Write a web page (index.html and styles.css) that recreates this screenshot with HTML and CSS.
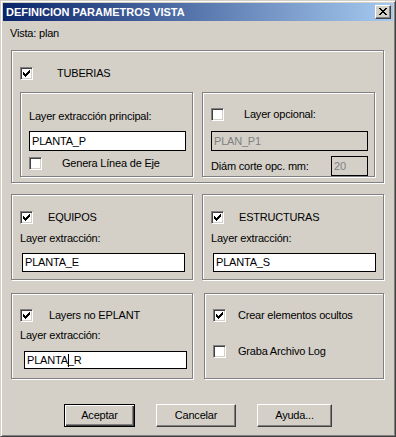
FILE: index.html
```html
<!DOCTYPE html>
<html lang="es">

<head>
    <meta charset="UTF-8">
    <meta name="viewport" content="width=device-width, initial-scale=1.0">
    <title>Definicion parametros vista</title>

    <link rel="stylesheet" href="styles.css">
</head>

<body>
    <div class="window">
        <div class="titlebar">
            <span class="title">DEFINICION PARAMETROS VISTA</span>
            <span class="close">
                <svg width="8" height="7" viewBox="0 0 8 7" shape-rendering="crispEdges">
                    <path d="M0 0h2v1h-2z M6 0h2v1h-2z M1 1h2v1h-2z M5 1h2v1h-2z M2 2h4v1h-4z M3 3h2v1h-2z M2 4h4v1h-4z M1 5h2v1h-2z M5 5h2v1h-2z M0 6h2v1h-2z M6 6h2v1h-2z" fill="#000"></path>
                </svg>
            </span>
        </div>

        <div class="content">
            <div class="vista">Vista: plan</div>

            <!-- TUBERIAS -->
            <div class="group tuberias">
                <div class="row gap_big">
                    <span class="check on"><svg width="7" height="7" viewBox="0 0 7 7" shape-rendering="crispEdges"><path d="M6 0h1v1h-1z M5 1h2v1h-2z M0 2h1v1h-1z M4 2h3v1h-3z M0 3h2v1h-2z M3 3h3v1h-3z M0 4h5v1h-5z M1 5h3v1h-3z M2 6h1v1h-1z" fill="#000"></path></svg></span>
                    <span>TUBERIAS</span>
                </div>

                <div class="inner_pair">
                    <div class="group inner inner_left">
                        <div class="lbl">Layer extracción principal:</div>
                        <div class="field f_principal">PLANTA_P</div>
                        <div class="row gap_mid eje">
                            <span class="check"></span>
                            <span>Genera Línea de Eje</span>
                        </div>
                    </div>

                    <div class="group inner inner_right">
                        <div class="row gap_mid">
                            <span class="check"></span>
                            <span>Layer opcional:</span>
                        </div>
                        <div class="field disabled f_opcional">PLAN_P1</div>
                        <div class="row diam">
                            <span>Diám corte opc. mm:</span>
                            <div class="field disabled f_small">20</div>
                        </div>
                    </div>
                </div>
            </div>

            <!-- EQUIPOS / ESTRUCTURAS -->
            <div class="pair pair_one">
                <div class="group box">
                    <div class="row gap_small">
                        <span class="check on"><svg width="7" height="7" viewBox="0 0 7 7" shape-rendering="crispEdges"><path d="M6 0h1v1h-1z M5 1h2v1h-2z M0 2h1v1h-1z M4 2h3v1h-3z M0 3h2v1h-2z M3 3h3v1h-3z M0 4h5v1h-5z M1 5h3v1h-3z M2 6h1v1h-1z" fill="#000"></path></svg></span>
                        <span>EQUIPOS</span>
                    </div>
                    <div class="lbl lbl_box">Layer extracción:</div>
                    <div class="field f_box">PLANTA_E</div>
                </div>

                <div class="group box">
                    <div class="row gap_small">
                        <span class="check on"><svg width="7" height="7" viewBox="0 0 7 7" shape-rendering="crispEdges"><path d="M6 0h1v1h-1z M5 1h2v1h-2z M0 2h1v1h-1z M4 2h3v1h-3z M0 3h2v1h-2z M3 3h3v1h-3z M0 4h5v1h-5z M1 5h3v1h-3z M2 6h1v1h-1z" fill="#000"></path></svg></span>
                        <span>ESTRUCTURAS</span>
                    </div>
                    <div class="lbl lbl_box">Layer extracción:</div>
                    <div class="field f_box">PLANTA_S</div>
                </div>
            </div>

            <!-- EPLANT / opciones -->
            <div class="pair pair_two">
                <div class="group box box_low">
                    <div class="row gap_eplant">
                        <span class="check on"><svg width="7" height="7" viewBox="0 0 7 7" shape-rendering="crispEdges"><path d="M6 0h1v1h-1z M5 1h2v1h-2z M0 2h1v1h-1z M4 2h3v1h-3z M0 3h2v1h-2z M3 3h3v1h-3z M0 4h5v1h-5z M1 5h3v1h-3z M2 6h1v1h-1z" fill="#000"></path></svg></span>
                        <span>Layers no EPLANT</span>
                    </div>
                    <div class="lbl lbl_low">Layer extracción:</div>
                    <div class="field f_low">PLANTA<span class="caret"></span>_R</div>
                </div>

                <div class="group box box_low">
                    <div class="row gap_opt">
                        <span class="check on"><svg width="7" height="7" viewBox="0 0 7 7" shape-rendering="crispEdges"><path d="M6 0h1v1h-1z M5 1h2v1h-2z M0 2h1v1h-1z M4 2h3v1h-3z M0 3h2v1h-2z M3 3h3v1h-3z M0 4h5v1h-5z M1 5h3v1h-3z M2 6h1v1h-1z" fill="#000"></path></svg></span>
                        <span>Crear elementos ocultos</span>
                    </div>
                    <div class="row gap_opt log">
                        <span class="check"></span>
                        <span>Graba Archivo Log</span>
                    </div>
                </div>
            </div>

            <div class="buttons">
                <button class="btn default btn_ok">Aceptar</button>
                <button class="btn btn_cancel">Cancelar</button>
                <button class="btn btn_help">Ayuda...</button>
            </div>
        </div>
    </div>
</body>

</html>
```

FILE: styles.css
```css
* {
    margin: 0;
    padding: 0;
    box-sizing: border-box;
}

body {
    background: #d4d0c8;
    font-family: "Liberation Sans", Arial, sans-serif;
    font-size: 11px;
    line-height: 13px;
    letter-spacing: -0.2px;
    color: #000;
}

/* window frame */
.window {
    width: 396px;
    height: 437px;
    border: 1px solid;
    border-color: #d4d0c8 #404040 #404040 #d4d0c8;
    box-shadow: inset 1px 1px 0 #fff, inset -1px -1px 0 #808080;
    padding: 2px;
    display: flex;
    flex-direction: column;
}

.titlebar {
    height: 18px;
    background: linear-gradient(to right, #0a246a, #a6caf0);
    display: flex;
    align-items: center;
    justify-content: space-between;
    padding: 0 2px 0 3px;
}

.title {
    color: #fff;
    font-weight: bold;
    letter-spacing: 0;
}

.close {
    width: 16px;
    height: 14px;
    background: #d4d0c8;
    border: 1px solid;
    border-color: #fff #404040 #404040 #fff;
    box-shadow: inset -1px -1px 0 #808080;
    display: flex;
    align-items: center;
    justify-content: center;
    padding-bottom: 1px;
}

.close svg,
.check svg {
    display: block;
}

.content {
    flex: 1;
    padding: 6px 9px 0 8px;
    display: flex;
    flex-direction: column;
}

.vista {
    margin-left: -1px;
}

/* etched group frame */
.group {
    border: 1px solid #808080;
    box-shadow: 1px 1px 0 #fff, inset 1px 1px 0 #fff;
}

.row {
    display: flex;
    align-items: center;
}

.gap_big {
    gap: 24px;
}

.gap_mid {
    gap: 20px;
}

.gap_small {
    gap: 15px;
}

.gap_eplant {
    gap: 16px;
}

.gap_opt {
    gap: 12px;
}

/* checkbox */
.check {
    width: 13px;
    height: 13px;
    flex-shrink: 0;
    background: #fff;
    border: 1px solid;
    border-color: #808080 #fff #fff #808080;
    box-shadow: inset 1px 1px 0 #404040, inset -1px -1px 0 #d4d0c8;
    padding: 2px;
}

/* text fields */
.field {
    border: 1px solid #000;
    background: #fff;
    padding: 0 2px;
    display: flex;
    align-items: center;
    white-space: nowrap;
}

.field.disabled {
    background: #d4d0c8;
    color: #808080;
}

.caret {
    display: inline-block;
    width: 1px;
    height: 13px;
    margin-right: -1px;
    background: #000;
}

/* TUBERIAS */
.tuberias {
    margin-top: 10px;
    height: 133px;
    padding: 16px 8px 0 8px;
}

.inner_pair {
    display: flex;
    gap: 9px;
    margin-top: 12px;
}

.inner {
    width: 173px;
    height: 85px;
}

.inner_left {
    padding: 17px 8px 0 8px;
}

.f_principal {
    width: 157px;
    height: 20px;
    margin-top: 8px;
}

.eje {
    margin-top: 6px;
}

.inner_right {
    padding: 15px 8px 0 8px;
}

.f_opcional {
    width: 157px;
    height: 20px;
    margin-top: 10px;
}

.diam {
    width: 157px;
    justify-content: space-between;
    margin-top: 5px;
}

.f_small {
    width: 37px;
    height: 20px;
}

/* two-column rows */
.pair {
    display: grid;
}

.pair_one {
    grid-template-columns: 182px 182px;
    gap: 9px;
    margin-top: 11px;
}

.pair_two {
    grid-template-columns: 182px 180px;
    gap: 11px;
    margin-top: 13px;
}

.box {
    height: 86px;
    padding: 16px 8px 0 8px;
}

.lbl_box {
    margin-top: 8px;
}

.f_box {
    width: 163px;
    height: 19px;
    margin: 8px 0 0 2px;
}

.box_low {
    padding-top: 15px;
}

.lbl_low {
    margin-top: 7px;
}

.f_low {
    width: 163px;
    height: 18px;
    margin: 9px 0 0 4px;
}

.log {
    margin-top: 23px;
}

/* buttons */
.buttons {
    display: flex;
    gap: 21px;
    margin-top: 25px;
    padding-left: 53px;
}

.btn {
    height: 23px;
    background: #d4d0c8;
    border: 1px solid;
    border-color: #fff #404040 #404040 #fff;
    box-shadow: inset -1px -1px 0 #808080;
    font: inherit;
    letter-spacing: inherit;
    color: #000;
    display: flex;
    align-items: center;
    justify-content: center;
}

.btn.default {
    border-color: #000;
    box-shadow: inset 1px 1px 0 #fff, inset -1px -1px 0 #404040, inset -2px -2px 0 #808080;
}

.btn_ok {
    width: 71px;
}

.btn_cancel {
    width: 80px;
}

.btn_help {
    width: 75px;
}
```
